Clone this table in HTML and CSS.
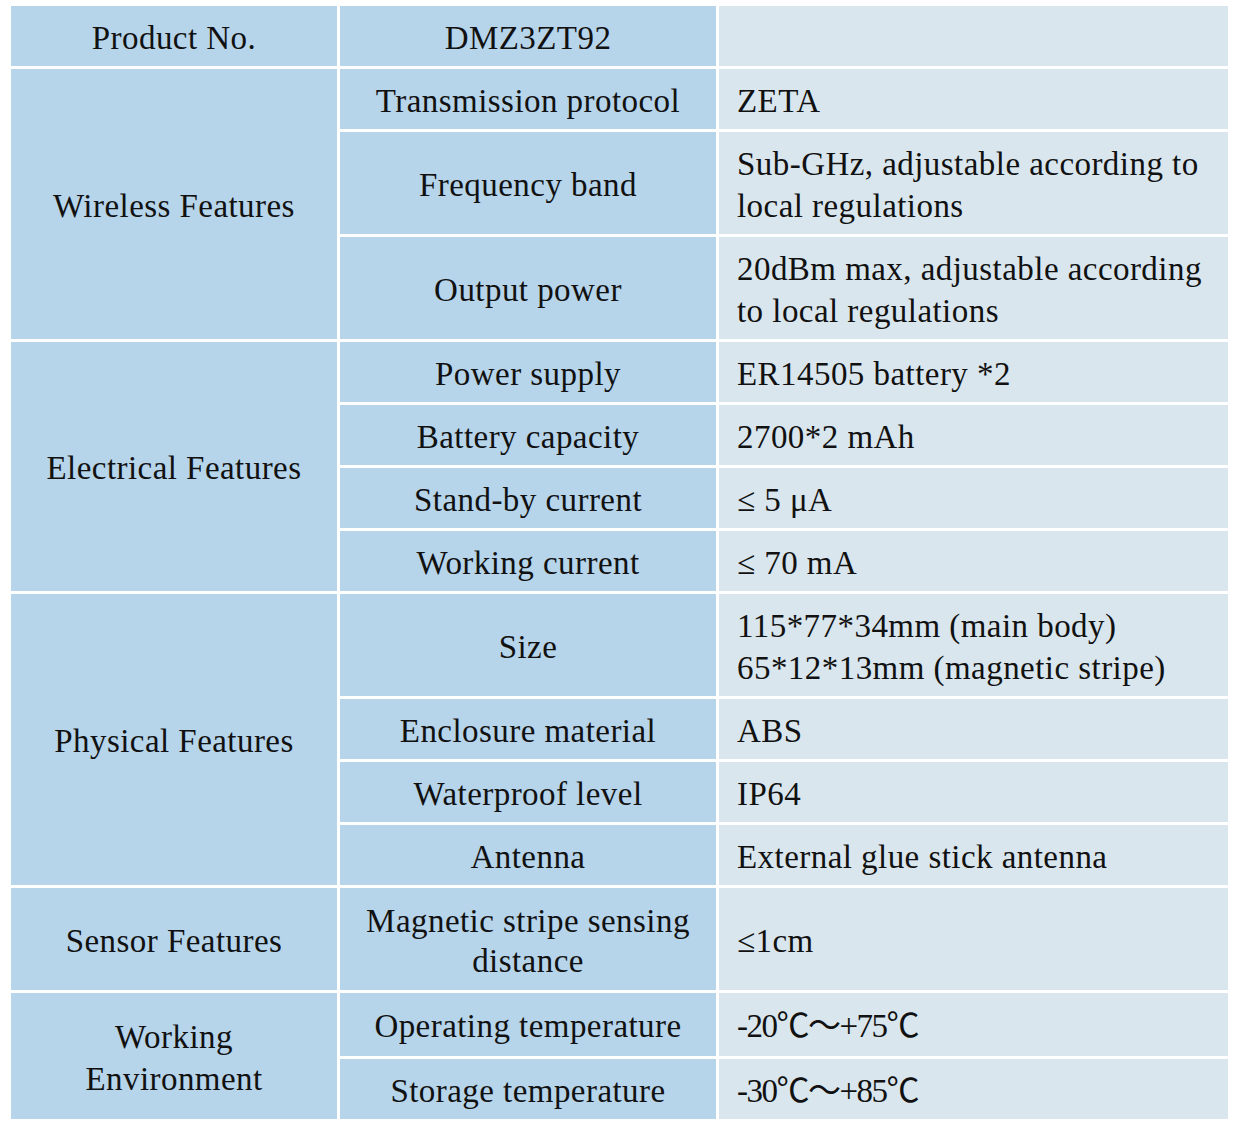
FILE: index.html
```html
<!DOCTYPE html>
<html>
<head>
<meta charset="utf-8">
<link rel="stylesheet" href="styles.css">
</head>
<body>
<table class="spec">
  <colgroup>
    <col class="c1"><col class="c2"><col class="c3">
  </colgroup>
  <tr class="r1">
    <td class="key">Product No.</td>
    <td class="key">DMZ3ZT92</td>
    <td class="val"></td>
  </tr>
  <tr class="r1">
    <td class="key" rowspan="3">Wireless Features</td>
    <td class="key">Transmission protocol</td>
    <td class="val">ZETA</td>
  </tr>
  <tr class="r2">
    <td class="key">Frequency band</td>
    <td class="val">Sub-GHz, adjustable according to<br>local regulations</td>
  </tr>
  <tr class="r2">
    <td class="key">Output power</td>
    <td class="val">20dBm max, adjustable according<br>to local regulations</td>
  </tr>
  <tr class="r1">
    <td class="key" rowspan="4">Electrical Features</td>
    <td class="key">Power supply</td>
    <td class="val">ER14505 battery *2</td>
  </tr>
  <tr class="r1">
    <td class="key">Battery capacity</td>
    <td class="val">2700*2 mAh</td>
  </tr>
  <tr class="r1">
    <td class="key">Stand-by current</td>
    <td class="val">≤ 5 μA</td>
  </tr>
  <tr class="r1">
    <td class="key">Working current</td>
    <td class="val">≤ 70 mA</td>
  </tr>
  <tr class="r2">
    <td class="key" rowspan="4">Physical Features</td>
    <td class="key">Size</td>
    <td class="val">115*77*34mm (main body)<br>65*12*13mm (magnetic stripe)</td>
  </tr>
  <tr class="r1">
    <td class="key">Enclosure material</td>
    <td class="val">ABS</td>
  </tr>
  <tr class="r1">
    <td class="key">Waterproof level</td>
    <td class="val">IP64</td>
  </tr>
  <tr class="r1">
    <td class="key">Antenna</td>
    <td class="val">External glue stick antenna</td>
  </tr>
  <tr class="r2">
    <td class="key">Sensor Features</td>
    <td class="key tight">Magnetic stripe sensing<br>distance</td>
    <td class="val">≤1cm</td>
  </tr>
  <tr class="r3">
    <td class="key" rowspan="2">Working<br>Environment</td>
    <td class="key">Operating temperature</td>
    <td class="val temp">-20℃～+75℃</td>
  </tr>
  <tr class="r1">
    <td class="key">Storage temperature</td>
    <td class="val temp">-30℃～+85℃</td>
  </tr>
</table>
</body>
</html>
```
FILE: styles.css
```css
html, body {
  margin: 0;
  padding: 0;
  background: #ffffff;
}

body {
  padding: 3px 0 0 8px;
}

.spec {
  border-collapse: separate;
  border-spacing: 3px;
  table-layout: fixed;
  width: 1223px;
  font-family: "Liberation Serif", "Noto Sans CJK SC", serif;
  font-size: 33px;
  letter-spacing: 0.45px;
  color: #111111;
}

.c1 { width: 326px; }
.c2 { width: 376px; }
.c3 { width: 509px; }

.spec td {
  padding: 3px 0 0 0;
  vertical-align: middle;
  line-height: 42px;
}

.r1 td { height: 57px; }
.r2 td { height: 99px; }
.r3 td { height: 60px; }

.key {
  background: #b6d4ea;
  text-align: center;
}

.val {
  background: #d9e6ee;
  text-align: left;
  padding-left: 18px !important;
}

.temp {
  letter-spacing: -1.5px;
}

.tight {
  line-height: 40px !important;
}
```
